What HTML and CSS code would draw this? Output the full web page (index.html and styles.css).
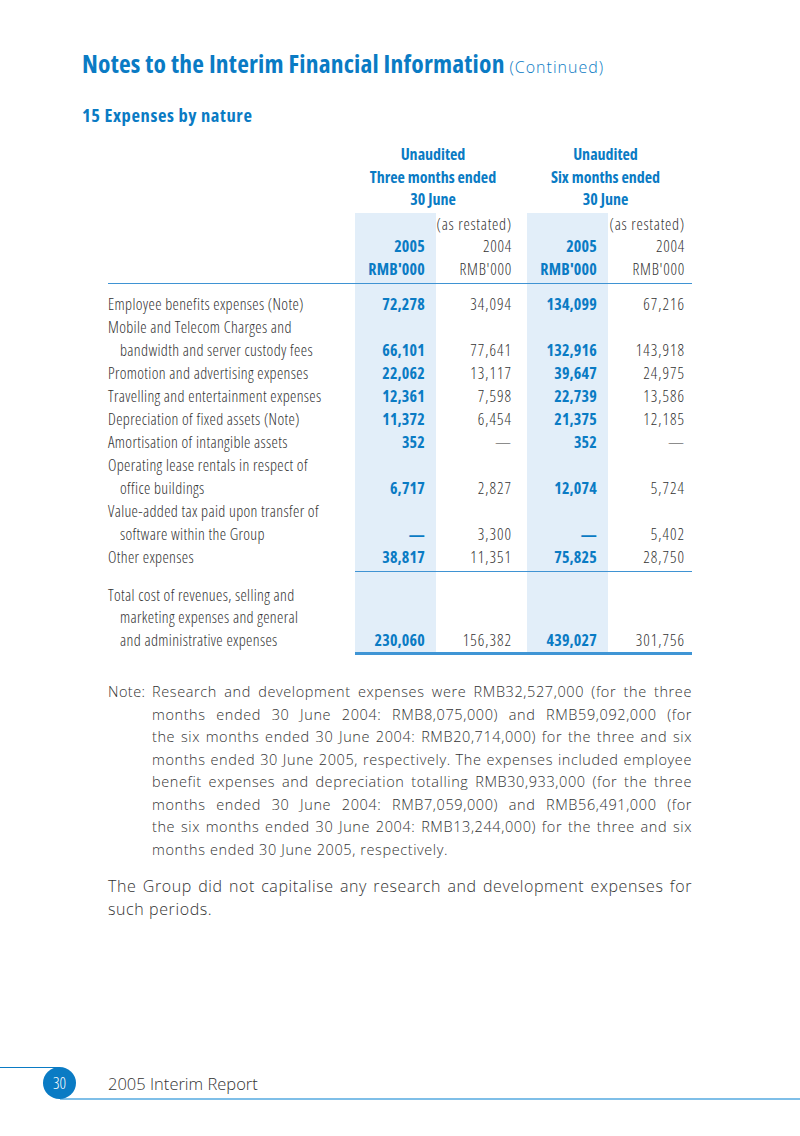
FILE: index.html
```html
<!DOCTYPE html>
<html lang="en">
<head>
<meta charset="utf-8">
<title>Notes to the Interim Financial Information</title>
<link rel="stylesheet" href="styles.css">
</head>
<body>
<div class="page">
  <h1 class="title">Notes to the Interim Financial Information <span class="cont">(Continued)</span></h1>
  <h2 class="section">15 Expenses by nature</h2>

  <table class="fin">
    <colgroup>
      <col class="w-lbl">
      <col class="w-c1">
      <col class="w-c2">
      <col class="w-c3">
      <col class="w-c4">
    </colgroup>
    <thead>
      <tr class="period">
        <th class="lbl"></th>
        <th colspan="2" class="grp g1">Unaudited<br>Three months ended<br>30 June</th>
        <th colspan="2" class="grp g2">Unaudited<br>Six months ended<br>30 June</th>
      </tr>
      <tr class="h-top">
        <th class="lbl"></th>
        <th class="c1 sh"></th>
        <th class="c2">(as restated)</th>
        <th class="c3 sh"></th>
        <th class="c4">(as restated)</th>
      </tr>
      <tr>
        <th class="lbl"></th>
        <th class="c1 sh hl">2005</th>
        <th class="c2">2004</th>
        <th class="c3 sh hl">2005</th>
        <th class="c4">2004</th>
      </tr>
      <tr class="h-bot">
        <th class="lbl"></th>
        <th class="c1 sh hl">RMB'000</th>
        <th class="c2">RMB'000</th>
        <th class="c3 sh hl">RMB'000</th>
        <th class="c4">RMB'000</th>
      </tr>
    </thead>
    <tbody class="items">
      <tr class="first">
        <td class="lbl">Employee benefits expenses (Note)</td>
        <td class="c1 sh hl">72,278</td><td class="c2">34,094</td>
        <td class="c3 sh hl">134,099</td><td class="c4">67,216</td>
      </tr>
      <tr>
        <td class="lbl">Mobile and Telecom Charges and</td>
        <td class="c1 sh"></td><td class="c2"></td><td class="c3 sh"></td><td class="c4"></td>
      </tr>
      <tr>
        <td class="lbl ind">bandwidth and server custody fees</td>
        <td class="c1 sh hl">66,101</td><td class="c2">77,641</td>
        <td class="c3 sh hl">132,916</td><td class="c4">143,918</td>
      </tr>
      <tr>
        <td class="lbl">Promotion and advertising expenses</td>
        <td class="c1 sh hl">22,062</td><td class="c2">13,117</td>
        <td class="c3 sh hl">39,647</td><td class="c4">24,975</td>
      </tr>
      <tr>
        <td class="lbl">Travelling and entertainment expenses</td>
        <td class="c1 sh hl">12,361</td><td class="c2">7,598</td>
        <td class="c3 sh hl">22,739</td><td class="c4">13,586</td>
      </tr>
      <tr>
        <td class="lbl">Depreciation of fixed assets (Note)</td>
        <td class="c1 sh hl">11,372</td><td class="c2">6,454</td>
        <td class="c3 sh hl">21,375</td><td class="c4">12,185</td>
      </tr>
      <tr>
        <td class="lbl">Amortisation of intangible assets</td>
        <td class="c1 sh hl">352</td><td class="c2">—</td>
        <td class="c3 sh hl">352</td><td class="c4">—</td>
      </tr>
      <tr>
        <td class="lbl">Operating lease rentals in respect of</td>
        <td class="c1 sh"></td><td class="c2"></td><td class="c3 sh"></td><td class="c4"></td>
      </tr>
      <tr>
        <td class="lbl ind">office buildings</td>
        <td class="c1 sh hl">6,717</td><td class="c2">2,827</td>
        <td class="c3 sh hl">12,074</td><td class="c4">5,724</td>
      </tr>
      <tr>
        <td class="lbl">Value-added tax paid upon transfer of</td>
        <td class="c1 sh"></td><td class="c2"></td><td class="c3 sh"></td><td class="c4"></td>
      </tr>
      <tr>
        <td class="lbl ind">software within the Group</td>
        <td class="c1 sh hl">—</td><td class="c2">3,300</td>
        <td class="c3 sh hl">—</td><td class="c4">5,402</td>
      </tr>
      <tr class="last">
        <td class="lbl">Other expenses</td>
        <td class="c1 sh hl">38,817</td><td class="c2">11,351</td>
        <td class="c3 sh hl">75,825</td><td class="c4">28,750</td>
      </tr>
    </tbody>
    <tbody class="total">
      <tr class="first">
        <td class="lbl">Total cost of revenues, selling and</td>
        <td class="c1 sh"></td><td class="c2"></td><td class="c3 sh"></td><td class="c4"></td>
      </tr>
      <tr>
        <td class="lbl ind">marketing expenses and general</td>
        <td class="c1 sh"></td><td class="c2"></td><td class="c3 sh"></td><td class="c4"></td>
      </tr>
      <tr class="last">
        <td class="lbl ind">and administrative expenses</td>
        <td class="c1 sh hl">230,060</td><td class="c2">156,382</td>
        <td class="c3 sh hl">439,027</td><td class="c4">301,756</td>
      </tr>
    </tbody>
  </table>

  <div class="note">
    <span class="note-tag">Note:</span>
    <div class="note-body">
      <span class="jl">Research and development expenses were RMB32,527,000 (for the three</span>
      <span class="jl">months ended 30 June 2004: RMB8,075,000) and RMB59,092,000 (for</span>
      <span class="jl">the six months ended 30 June 2004: RMB20,714,000) for the three and six</span>
      <span class="jl">months ended 30 June 2005, respectively. The expenses included employee</span>
      <span class="jl">benefit expenses and depreciation totalling RMB30,933,000 (for the three</span>
      <span class="jl">months ended 30 June 2004: RMB7,059,000) and RMB56,491,000 (for</span>
      <span class="jl">the six months ended 30 June 2004: RMB13,244,000) for the three and six</span>
      <span class="ln">months ended 30 June 2005, respectively.</span>
    </div>
  </div>

  <p class="para">
    <span class="jl">The Group did not capitalise any research and development expenses for</span>
    <span class="ln">such periods.</span>
  </p>

  <footer class="foot">
    <span class="pgno">30</span>
    <span class="foot-title">2005 Interim Report</span>
  </footer>
</div>
</body>
</html>
```

FILE: styles.css
```css
* { box-sizing: border-box; }

html, body {
  margin: 0;
  padding: 0;
  background: #ffffff;
}

body {
  font-family: "Open Sans", "Liberation Sans", sans-serif;
  font-weight: 300;
  color: #333333;
}

.page {
  width: 800px;
  min-height: 1136px;
  display: flex;
  flex-direction: column;
  padding: 48px 0 37px 82px;
}

.title {
  margin: 0;
  font-family: "Open Sans", sans-serif;
  font-stretch: 75%;
  font-weight: 700;
  font-size: 25.5px;
  line-height: 30px;
  letter-spacing: 0.2px;
  color: #0a7bc4;
}

.cont {
  font-stretch: 100%;
  font-weight: 300;
  font-size: 16px;
  letter-spacing: 1px;
}

.section {
  margin: 23px 0 0 0;
  font-family: "Open Sans", sans-serif;
  font-stretch: 75%;
  font-weight: 700;
  font-size: 18.5px;
  line-height: 20px;
  letter-spacing: 0.6px;
  color: #0a7bc4;
}

/* ---------- table ---------- */
.fin {
  margin: 18px 0 0 26px;
  width: 584px;
  border-collapse: collapse;
  table-layout: fixed;
  font-family: "Open Sans", sans-serif;
  font-stretch: 75%;
  font-weight: 300;
  font-size: 16px;
  color: #333333;
}

.w-lbl { width: 247px; }
.w-c1 { width: 81px; }
.w-c2 { width: 91px; }
.w-c3 { width: 81px; }
.w-c4 { width: 84px; }

.fin th, .fin td {
  padding: 0;
  font-weight: 300;
  white-space: nowrap;
  line-height: 23px;
  height: 23px;
}

.fin .lbl { text-align: left; letter-spacing: 0.35px; }
.fin .c1 { text-align: right; padding-right: 11px; }
.fin .c2 { text-align: right; padding-right: 15px; letter-spacing: 1px; }
.fin .c3 { text-align: right; padding-right: 11px; }
.fin .c4 { text-align: right; padding-right: 7px; letter-spacing: 1px; }

.fin thead .c2 { letter-spacing: 0.75px; }
.fin thead .c4 { letter-spacing: 0.75px; }

.fin .ind { padding-left: 12px; }

.fin .sh { background: #e2eef9; }
.fin .hl { color: #0a7bc4; font-weight: 700; letter-spacing: 0.2px; }

.period .grp {
  text-align: center;
  color: #0a7bc4;
  font-weight: 700;
  font-size: 16px;
  line-height: 22.5px;
  height: auto;
  padding-bottom: 2px;
  letter-spacing: 0;
}
.period .g1 { padding-right: 16px; }
.period .g2 { padding-right: 8px; }

.fin thead tr:not(.period) th { line-height: 22.5px; height: 22.5px; }

.h-bot th {
  padding-bottom: 3px;
  height: 25.5px !important;
  border-bottom: 1px solid #3f93d3;
}

.items tr.first td { padding-top: 9px; height: 32px; }
.items tr.last td:not(.lbl) { border-bottom: 1px solid #3f93d3; }
.items tr.last td { padding-bottom: 2px; height: 25px; }

.total td { line-height: 22.5px; height: 22.5px; }
.total tr.first td { padding-top: 12px; height: 34.5px; }
.total tr.last td { padding-bottom: 1px; height: 23.5px; }
.total tr.last td:not(.lbl) { border-bottom: 3px solid #3f95d5; }

/* ---------- note ---------- */
.note {
  display: flex;
  margin: 26px 0 0 26px;
  width: 584px;
  font-size: 14.5px;
  line-height: 22.57px;
  letter-spacing: 0.6px;
  color: #333333;
}

.note-tag { width: 44px; flex: none; letter-spacing: 0.45px; }
.note-body { flex: 1; min-width: 0; }

.jl {
  display: block;
  white-space: nowrap;
  text-align: justify;
  text-align-last: justify;
}
.ln { display: block; white-space: nowrap; }

.para {
  margin: 13px 0 0 26px;
  width: 584px;
  font-size: 16px;
  line-height: 23px;
  letter-spacing: 0.6px;
  color: #333333;
}

/* ---------- footer ---------- */
.foot {
  margin-top: auto;
  margin-left: -82px;
  width: 800px;
  height: 32px;
  position: relative;
  display: flex;
  align-items: center;
  padding-left: 43px;
}

.foot::before {
  content: "";
  position: absolute;
  left: 0;
  top: 0;
  width: 60px;
  border-top: 1px solid #0a7bc4;
}

.foot::after {
  content: "";
  position: absolute;
  left: 60px;
  right: 0;
  bottom: -1px;
  border-top: 2px solid #7fbfe8;
}

.pgno {
  position: relative;
  z-index: 1;
  width: 33px;
  height: 32px;
  border-radius: 50%;
  background: #0a7bc4;
  color: #ffffff;
  font-size: 16px;
  font-weight: 300;
  font-stretch: 87.5%;
  line-height: 32px;
  text-align: center;
  flex: none;
}

.foot-title {
  margin-left: 32px;
  font-stretch: 100%;
  font-weight: 300;
  font-size: 16.5px;
  color: #333333;
  letter-spacing: 0;
}
```
